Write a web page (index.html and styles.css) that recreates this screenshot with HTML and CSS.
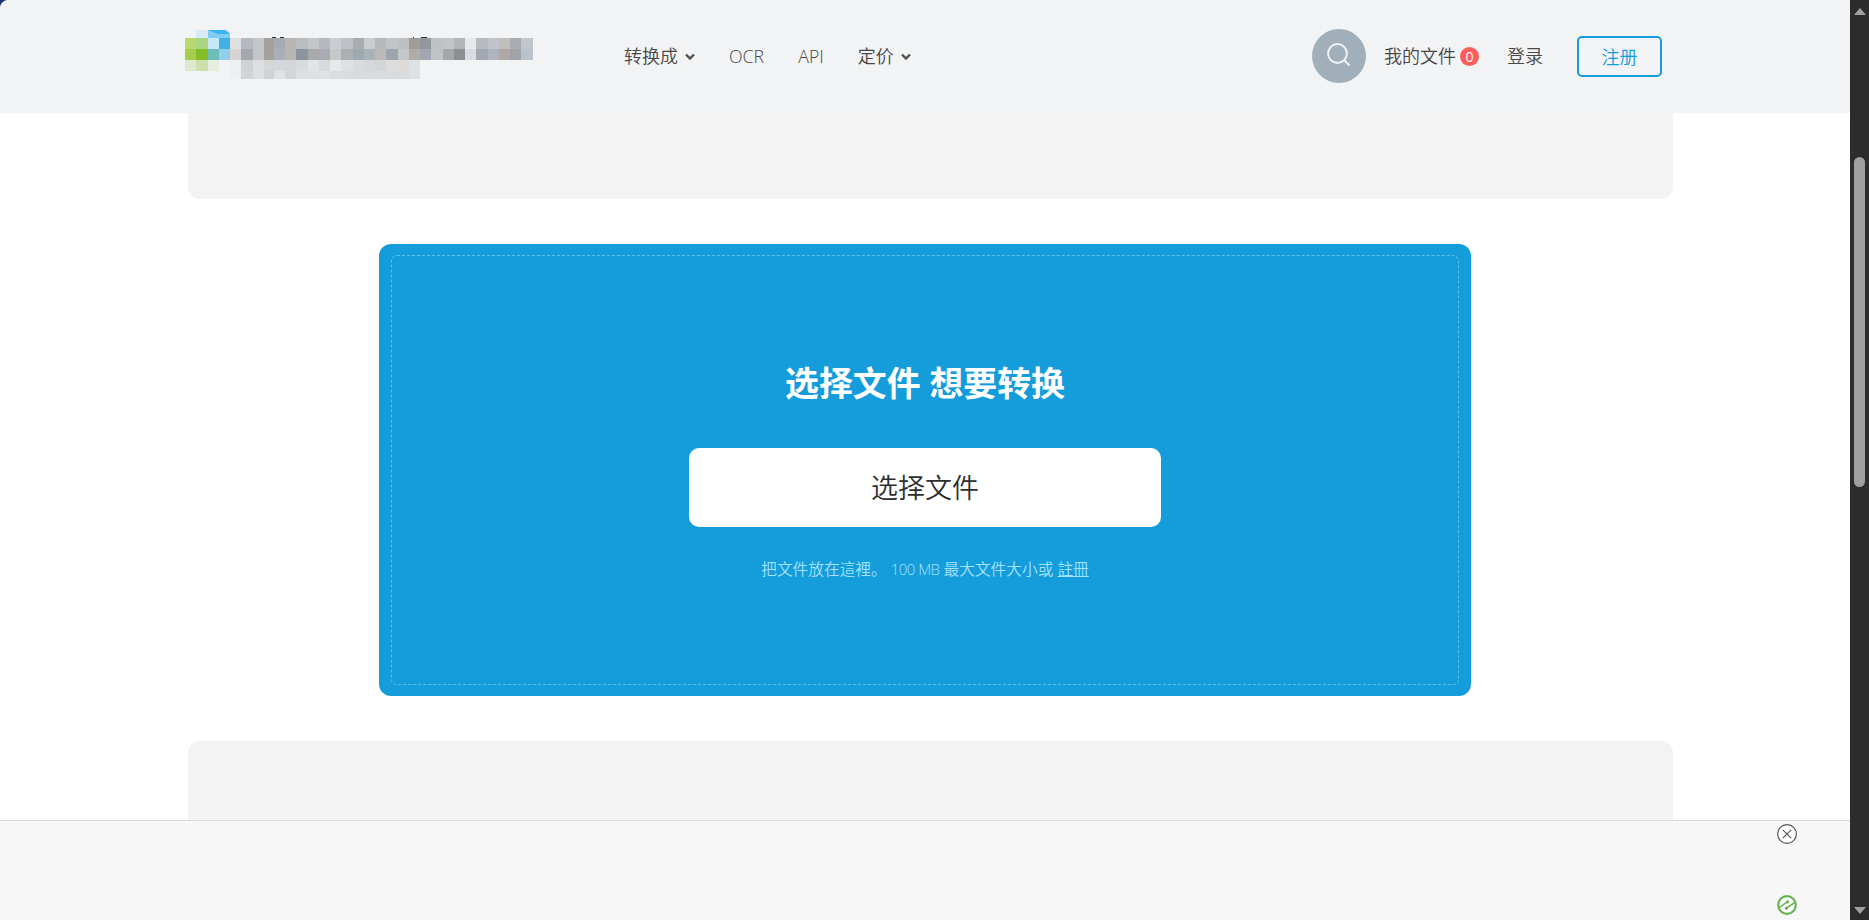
FILE: index.html
```html
<!DOCTYPE html>
<html lang="zh-CN">
<head>
  <meta charset="UTF-8">
  <meta name="viewport" content="width=device-width, initial-scale=1.0">
  <title>选择文件 想要转换</title>
  <link rel="stylesheet" href="styles.css">
</head>
<body>
  <div class="page">
    <header class="header">
      <svg class="logo" width="348" height="50" viewBox="185 30 348 50" shape-rendering="crispEdges">
        <!-- coloured mark -->
        <path fill="#d8eaf5" d="M196 30h12v8h-12z"/>
        <path fill="#80cdf2" d="M208 30h19l3 4v4h-22z"/>
        <path fill="#35b5f1" d="M208 30h16l6 4h-12z"/>
        <path fill="#b9d96f" d="M185 38h11v11h-11z"/>
        <path fill="#abd681" d="M196 38h12v11h-12z"/>
        <path fill="#c7e8f8" d="M208 38h11v11h-11z"/>
        <path fill="#43b1e4" d="M219 38h11v11h-11z"/>
        <path fill="#a6cd4b" d="M185 49h11v11h-11z"/>
        <path fill="#84bc2a" d="M196 49h12v11h-12z"/>
        <path fill="#6dbdb9" d="M208 49h11v11h-11z"/>
        <path fill="#93cfea" d="M219 49h11v11h-11z"/>
        <path fill="#dde8cf" d="M185 60h11v11h-11z"/>
        <path fill="#cfdfab" d="M196 60h12v11h-12z"/>
        <path fill="#e6eedf" d="M208 60h11v11h-11z"/>
        <!-- word mark -->
        <g id="wordmark"></g>
        <path fill="#333" d="M272 37h4v1h-4zM280 37h4v1h-4zM413 37h1v1h-1zM421 37h6v1h-6z"/>
      </svg>
      <nav class="nav">
        <a class="nav-item">转换成<svg class="caret" width="10" height="8" viewBox="0 0 10 8"><path d="M1 1.5l4 4 4-4"/></svg></a>
        <a class="nav-item latin">OCR</a>
        <a class="nav-item latin">API</a>
        <a class="nav-item">定价<svg class="caret" width="10" height="8" viewBox="0 0 10 8"><path d="M1 1.5l4 4 4-4"/></svg></a>
      </nav>
      <div class="user">
        <div class="search">
          <svg width="54" height="54" viewBox="0 0 54 54"><circle cx="25.5" cy="24.5" r="9.4"/><path d="M32 31l5.5 5.5"/></svg>
        </div>
        <a class="files">我的文件<span class="badge">0</span></a>
        <a class="login">登录</a>
        <a class="register">注册</a>
      </div>
    </header>

    <main class="content">
      <div class="banner banner-top"></div>
      <section class="upload">
        <div class="drop-area">
          <h1 class="title">选择文件 想要转换</h1>
          <button class="choose">选择文件</button>
          <p class="note">把文件放在這裡。 <span class="size">100 MB</span> 最大文件大小或 <a class="note-link">註冊</a></p>
        </div>
      </section>
      <div class="banner banner-bottom"></div>
    </main>

    <div class="ad-bar">
      <svg class="close" width="20" height="20" viewBox="0 0 20 20"><circle cx="10" cy="10" r="9.4"/><path d="M5.8 5.8l8.4 8.4M14.2 5.8l-8.4 8.4"/></svg>
      <svg class="ezoic" width="20" height="20" viewBox="0 0 20 20"><circle cx="10" cy="10" r="8.8"/><path d="M2 12.6l8.6-5.8M9.4 13.2l8.6-5.8"/><path class="dot" d="M9 6.8a1.6 1.6 0 1 1 3.2 0 1.6 1.6 0 0 1-3.2 0M7.8 13.2a1.6 1.6 0 1 1 3.2 0 1.6 1.6 0 0 1-3.2 0"/></svg>
    </div>
    <div class="corner"></div>
  </div>

  <div class="scrollbar">
    <div class="arrow-up"></div>
    <div class="thumb"></div>
    <div class="arrow-down"></div>
  </div>

  <script src="script.js"></script>
</body>
</html>
```
FILE: styles.css
```css
body {
  margin: 0;
  display: flex;
  width: 1869px;
  height: 920px;
  overflow: hidden;
  background: #fff;
  color: #484848;
  font-family: "Open Sans", "Noto Sans CJK SC", sans-serif;
  font-weight: 350;
}
.page {
  position: relative;
  width: 1850px;
  height: 920px;
  overflow: hidden;
}
.header {
  display: flex;
  align-items: center;
  box-sizing: border-box;
  height: 113px;
  padding: 0 188px 0 185px;
  background: #f1f3f5;
}
.logo {
  flex: none;
  margin-bottom: 4px;
}
.nav {
  display: flex;
  align-items: center;
  gap: 34px;
  margin: 0 0 2px 91px;
  font-size: 18px;
  line-height: 26px;
}
.nav-item {
  display: flex;
  align-items: center;
  white-space: nowrap;
}
.latin {
  font-size: 17.8px;
}
.caret {
  margin: 3px 0 0 7px;
  fill: none;
  stroke: #505050;
  stroke-width: 2.4;
}
.user {
  display: flex;
  align-items: center;
  margin: 0 0 1px auto;
  font-size: 18px;
  line-height: 26px;
}
.search {
  width: 54px;
  height: 54px;
  border-radius: 50%;
  background: #a0afba;
}
.search svg {
  display: block;
  fill: none;
  stroke: #f1f3f5;
  stroke-width: 2;
}
.files {
  display: flex;
  align-items: center;
  margin-left: 18px;
}
.badge {
  width: 19px;
  height: 19px;
  margin-left: 4px;
  border-radius: 50%;
  background: #ff5c5c;
  color: #fff;
  font-family: "Open Sans", sans-serif;
  font-size: 14px;
  font-weight: 400;
  line-height: 19px;
  text-align: center;
}
.login {
  margin-left: 28px;
}
.register {
  box-sizing: border-box;
  width: 85px;
  height: 41px;
  margin-left: 34px;
  border: 2px solid #159cda;
  border-radius: 5px;
  color: #159cda;
  line-height: 38px;
  text-align: center;
}
.content {
  display: flex;
  flex-direction: column;
  align-items: center;
}
.banner {
  width: 1485px;
  margin-left: 11px;
  background: #f3f3f3;
}
.banner-top {
  height: 86px;
  border-radius: 0 0 12px 12px;
}
.banner-bottom {
  height: 220px;
  border-radius: 12px 12px 0 0;
}
.upload {
  box-sizing: border-box;
  width: 1092px;
  height: 452px;
  margin: 45px 0;
  padding: 11px 12px;
  border-radius: 12px;
  background: #159cda;
}
.drop-area {
  display: flex;
  flex-direction: column;
  align-items: center;
  box-sizing: border-box;
  height: 430px;
  padding-top: 102px;
  border: 1px dashed #63bee9;
  border-radius: 6px;
}
.title {
  margin: 0;
  color: #fff;
  font-size: 33.9px;
  font-weight: 700;
  line-height: 50px;
}
.choose {
  width: 472px;
  height: 79px;
  margin: 40px 0 30px;
  padding: 0 0 2px;
  border: none;
  border-radius: 10px;
  background: #fff;
  color: #2e2e2e;
  font-family: inherit;
  font-size: 27px;
  font-weight: 350;
}
.note {
  margin: 0;
  color: #a4e2fd;
  font-size: 15.7px;
  line-height: 24px;
  white-space: nowrap;
}
.size {
  font-size: 15px;
  letter-spacing: -0.55px;
}
.note-link {
  text-decoration: underline;
}
/* translucent strip over the bottom of the page */
.ad-bar {
  position: absolute;
  left: 0;
  right: 0;
  bottom: 0;
  display: flex;
  flex-direction: column;
  justify-content: space-between;
  align-items: flex-end;
  box-sizing: border-box;
  height: 100px;
  padding: 3px 53px 5px 0;
  border-top: 1px solid #dcdcdc;
  background: rgba(246, 246, 246, 0.85);
}
.close {
  fill: #fff;
  stroke: #555;
  stroke-width: 1.2;
}
.ezoic {
  fill: #fff;
  stroke: #67b352;
  stroke-width: 1.5;
}
.ezoic circle {
  stroke-width: 2.2;
}
.ezoic .dot {
  fill: #67b352;
  stroke: none;
}
.corner {
  position: absolute;
  left: 0;
  top: 0;
  width: 8px;
  height: 8px;
  background: radial-gradient(circle at 8px 8px, transparent 7.5px, #1c2f70 8.5px);
}
.scrollbar {
  display: flex;
  flex-direction: column;
  align-items: center;
  box-sizing: border-box;
  width: 19px;
  height: 920px;
  padding: 8px 0 6px;
  background: #2c2c2c;
}
.arrow-up,
.arrow-down {
  border: solid transparent;
  border-width: 0 6.5px;
}
.arrow-up {
  border-bottom: 7px solid #a0a0a0;
}
.arrow-down {
  margin-top: auto;
  border-top: 7px solid #a0a0a0;
}
.thumb {
  width: 11px;
  height: 330px;
  margin-top: 142px;
  border-radius: 6px;
  background: #9f9f9f;
}
```
FILE: script.js
```js
// column edges of the word mark
const cols = [230, 241, 253, 264, 274, 285, 296, 308, 319, 330, 341, 353, 364, 375, 386, 398,
  409, 420, 431, 443, 454, 465, 476, 488, 499, 510, 521, 533];

// one entry per row of tiles
const rows = [
  { y: 38, h: 11, fill: ['e0e0e0', 'b5bac1', 'c3c7ca', 'a5a29e', 'a5abb4', 'b8b5b3', 'b9bec3', 'c4c7c9', 'b4b9bf', 'cacccf', 'bdc0c6', 'a8adb0', 'c9cdd0', 'b7b8b9', 'c0c3c8', 'bdbfc0', 'a09c96', '93969d', 'c0c1c3', 'c2c4c5', 'b3b5b7', 'e6eaed', 'b6bac0', 'c0c4ca', 'c0bebb', 'a8acb1', 'bfc6ce'] },
  { y: 49, h: 11, fill: ['d6d4d3', 'a4a9af', 'c3c7ca', 'a5a29e', 'aaafb9', 'b8b5b3', '8e949b', 'a9a9aa', 'a8abb2', 'c6c8ca', 'abaeb3', '9faaae', 'aab2ba', 'bbb9ba', '9fa5ae', 'c3c7ca', 'b1aca8', 'a2a6b0', 'c0c3c4', 'a5a7a9', '8d9092', 'd7dde0', 'a2a7b0', 'b0b4bf', 'b0a8a4', 'a0a3a8', 'b8c3cd'] },
  { y: 60, h: 11, fill: ['eeeff0', 'cfd2d4', 'dddfe0', 'd5d6d7', 'd3d8dd', 'd3d5d7', 'd8dcde', 'e3e4e6', 'd4dadd', 'e7e8e9', 'dde1e4', 'd9dcdf', 'd7d8d9', 'd4d5d6', 'dcdddf', 'dddbd8', 'dfe2e5'] },
  { y: 71, h: 8, fill: ['eeeff0', 'd2d5d7', 'dedfe0', 'cfd2d4', 'dfe2e4', 'd3d5d7', 'dddfe0', 'dedfe1', 'e0e2e4', 'dcdddf', 'd8dde2', 'd8dadb', 'd9dbdc', 'dbdcdd', 'd9dadc', 'd9dbdd', 'dce1e4'] }
];

const wordmark = document.getElementById('wordmark');

rows.forEach(row => {
  row.fill.forEach((color, i) => {
    const tile = document.createElementNS('http://www.w3.org/2000/svg', 'rect');
    tile.setAttribute('x', cols[i]);
    tile.setAttribute('y', row.y);
    tile.setAttribute('width', cols[i + 1] - cols[i]);
    tile.setAttribute('height', row.h);
    tile.setAttribute('fill', '#' + color);
    wordmark.appendChild(tile);
  });
});
```
